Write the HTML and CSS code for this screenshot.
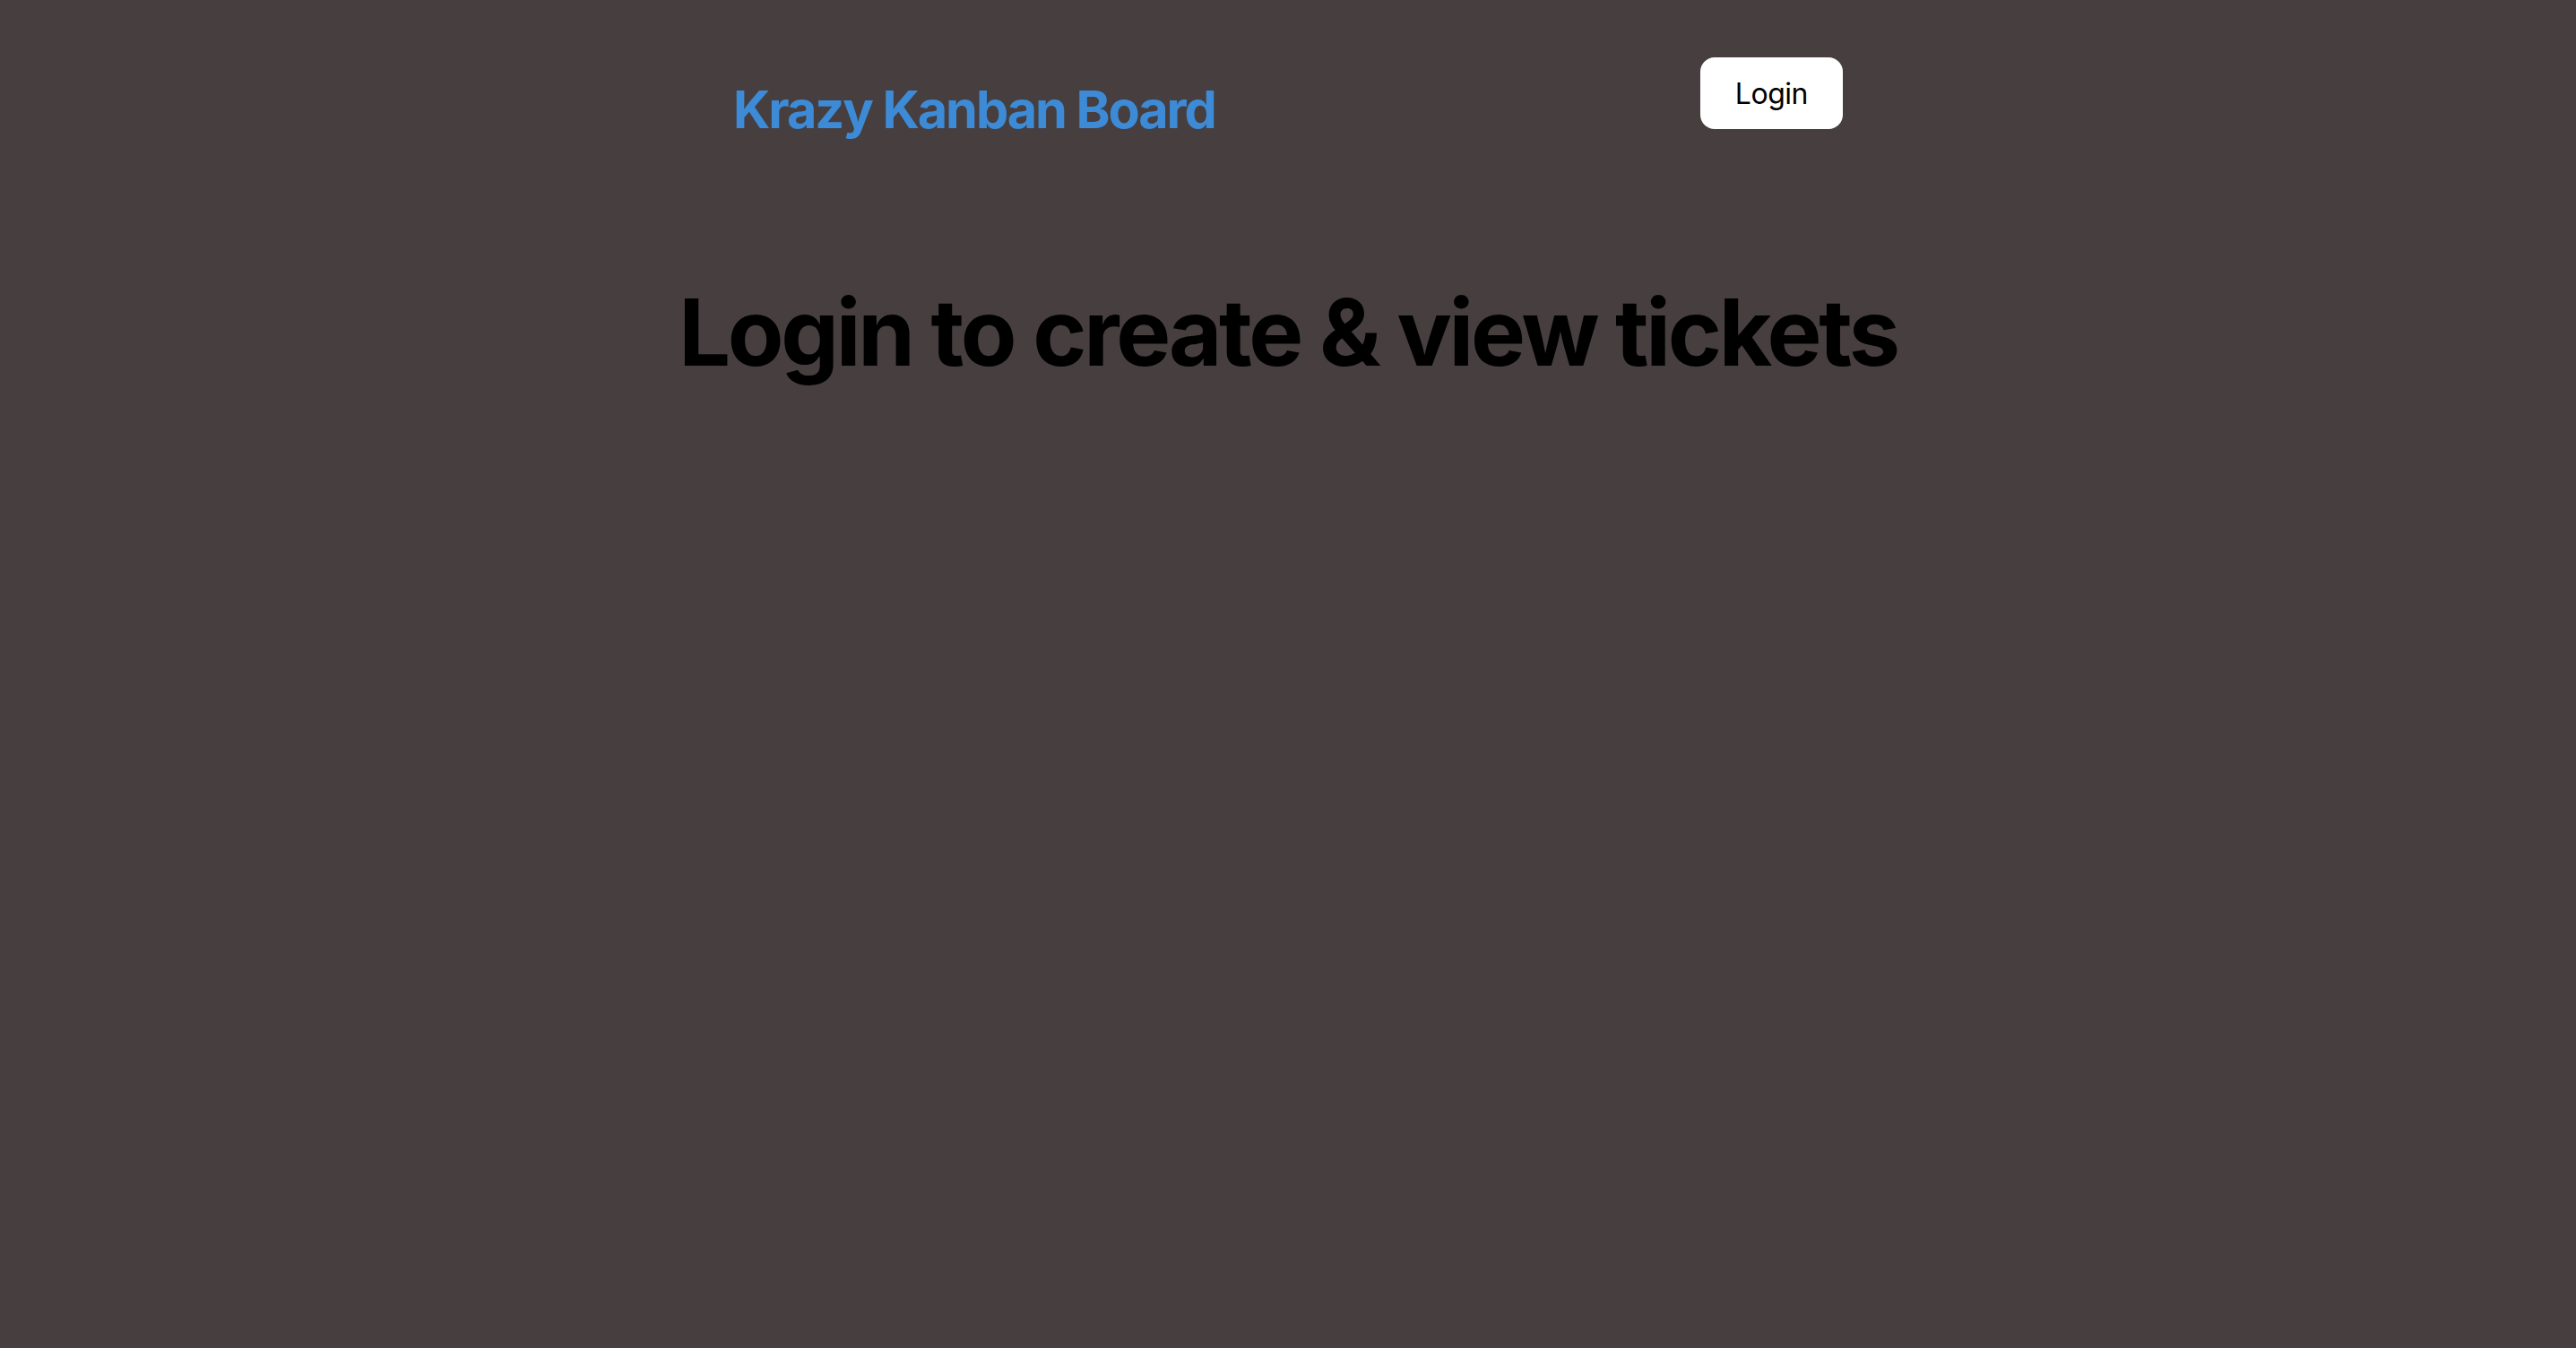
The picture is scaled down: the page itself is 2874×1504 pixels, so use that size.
FILE: index.html
```html
<!DOCTYPE html>
<html lang="en">
<head>
<meta charset="UTF-8">
<title>Krazy Kanban Board</title>
<link rel="stylesheet" href="styles.css">
</head>
<body>
<div class="app">
  <header class="nav">
    <h1 class="brand">Krazy Kanban Board</h1>
    <button class="login-btn" type="button">Login</button>
  </header>
  <main class="main">
    <h1 class="headline">Login to create &amp; view tickets</h1>
  </main>
</div>
</body>
</html>
```

FILE: styles.css
```css
html, body {
  margin: 0;
  padding: 0;
}
body {
  background: #463e3f;
  font-family: Inter, "Noto Sans", sans-serif;
  min-height: 100vh;
}
.app {
  min-height: 100vh;
}
.nav {
  width: 1238px;
  margin: 0 auto;
  display: flex;
  justify-content: space-between;
  align-items: flex-start;
}
.brand {
  margin: 87px 0 0 0;
  font-size: 57.6px;
  line-height: normal;
  font-weight: 700;
  letter-spacing: -0.036em;
  color: #3d8bd6;
}
.login-btn {
  margin-top: 64px;
  font-family: Inter, "Noto Sans", sans-serif;
  font-size: 32px;
  font-weight: 400;
  letter-spacing: -0.015em;
  line-height: normal;
  color: #000;
  background: #fff;
  border: 1px solid transparent;
  border-radius: 16px;
  padding: 19.5px 38px;
  cursor: pointer;
}
.main {
  display: flex;
  justify-content: center;
}
.headline {
  margin: 152px 0 0 0;
  font-size: 102.4px;
  line-height: normal;
  font-weight: 700;
  letter-spacing: -0.032em;
  color: #000;
  text-align: center;
}
```
